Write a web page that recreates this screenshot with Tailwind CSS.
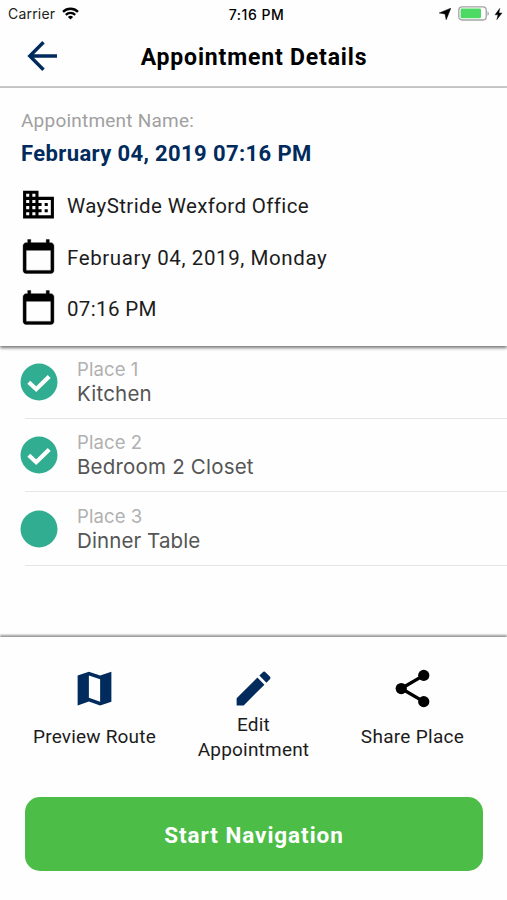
<!DOCTYPE html>
<html lang="en">
<head>
  <meta charset="UTF-8" />
  <meta name="viewport" content="width=device-width, initial-scale=1" />
  <title>Appointment Details</title>
  <script src="https://cdn.jsdelivr.net/npm/@tailwindcss/browser@4"></script>
</head>
<body class="bg-[#fefefe] h-[900px] flex flex-col overflow-hidden font-[Roboto,sans-serif] text-[#1c1c1c]">

  <!-- Status bar -->
  <div class="h-[27px] shrink-0 grid grid-cols-3 items-center pl-2 pr-1 font-[Inter,sans-serif] text-black">
    <div class="flex items-center gap-[7px]">
      <span class="text-[14px] tracking-[0.2px] text-[#222]">Carrier</span>
      <svg class="w-[17px] h-[13px]" viewBox="0 0 17 13" fill="none" stroke="#000" stroke-width="2.3">
        <path d="M1 4.8a10.8 10.8 0 0 1 15 0" />
        <path d="M3.8 7.8a6.8 6.8 0 0 1 9.4 0" />
        <path d="M8.5 12.6L5.9 9.9a3.8 3.8 0 0 1 5.2 0z" fill="#000" stroke="none" />
      </svg>
    </div>
    <span class="pt-px pl-0.5 text-[14px] font-medium text-center whitespace-nowrap tracking-[0.5px]">7:16 PM</span>
    <div class="flex items-center justify-end">
      <svg class="w-3 h-3 mr-[7px]" viewBox="0 0 12 12"><path d="M11.8.2L7.2 11.8 6 6 .2 5z" stroke="#000" stroke-width=".5" /></svg>
      <svg class="w-8 h-[15px] mr-1" viewBox="0 0 32 15">
        <rect x=".8" y=".8" width="27.4" height="13.2" rx="3.2" fill="#fff" stroke="#a3a3a3" stroke-width="1.3" />
        <rect x="2.6" y="2.6" width="20.4" height="9.6" rx="1.2" fill="#4cd964" />
        <path d="M29.5 5.2c1.8.6 1.8 4 0 4.6z" fill="#a3a3a3" />
      </svg>
      <svg class="w-[9px] h-3" viewBox="0 0 9 12"><path d="M5.8.3L1 6.8h3L2.8 11.7 8 5H4.9z" stroke="#000" stroke-width=".4" /></svg>
    </div>
  </div>

  <!-- Title bar -->
  <header class="h-[61px] shrink-0 grid grid-cols-[80px_1fr_80px] items-center border-b-2 border-[#c9c9c9]">
    <svg class="w-[31px] h-[31px] ml-[27px]" viewBox="0 0 31 31" fill="none" stroke="#002b5c" stroke-width="3.4">
      <path d="M30 15H3M16.5 1.3L2.8 15l13.7 13.7" />
    </svg>
    <h1 class="pt-[3px] pl-px text-[23px] leading-7 font-bold text-black text-center whitespace-nowrap tracking-[0.83px]">Appointment Details</h1>
  </header>

  <!-- Appointment info -->
  <section class="relative z-10 h-[258px] shrink-0 pl-[21px] bg-[#fefefe] shadow-[0_2px_3px_#777]">
    <p class="pt-[21px] text-[19px] leading-6 text-[#a0a0a0] tracking-[0.22px]">Appointment Name:</p>
    <p class="pt-[7px] text-[22px] leading-7 font-bold text-[#002b5c] tracking-[0.38px]">February 04, 2019 07:16 PM</p>
    <ul class="mt-[18px] flex flex-col gap-[14px] text-[20.5px]">
      <li class="flex items-center gap-[10px]">
        <svg class="w-[37px] h-[37px] -ml-px" viewBox="0 0 24 24"><path d="M12 7V3H2v18h20V7H12zM6 19H4v-2h2v2zm0-4H4v-2h2v2zm0-4H4V9h2v2zm0-4H4V5h2v2zm4 12H8v-2h2v2zm0-4H8v-2h2v2zm0-4H8V9h2v2zm0-4H8V5h2v2zm10 12h-8v-2h2v-2h-2v-2h2v-2h-2V9h8v10zm-2-8h-2v2h2v-2zm0 4h-2v2h2v-2z" /></svg>
        <span class="pt-1 tracking-[0.38px]">WayStride Wexford Office</span>
      </li>
      <li class="flex items-center gap-[10px]">
        <svg class="w-[37px] h-[37px] -ml-px mt-px -mb-px" viewBox="0 0 24 24"><path d="M20 3h-1V1h-2v2H7V1H5v2H4c-1.1 0-2 .9-2 2v16c0 1.1.9 2 2 2h16c1.1 0 2-.9 2-2V5c0-1.1-.9-2-2-2zm0 18H4V8h16v13z" stroke="#000" stroke-width=".25" /></svg>
        <span class="pt-[5px] tracking-[0.6px]">February 04, 2019, Monday</span>
      </li>
      <li class="flex items-center gap-[10px]">
        <svg class="w-[37px] h-[37px] -ml-px mt-px -mb-px" viewBox="0 0 24 24"><path d="M20 3h-1V1h-2v2H7V1H5v2H4c-1.1 0-2 .9-2 2v16c0 1.1.9 2 2 2h16c1.1 0 2-.9 2-2V5c0-1.1-.9-2-2-2zm0 18H4V8h16v13z" stroke="#000" stroke-width=".25" /></svg>
        <span class="pt-[5px] tracking-[0.35px]">07:16 PM</span>
      </li>
    </ul>
  </section>

  <!-- Places -->
  <ul class="h-[291px] shrink-0 pl-[25px] font-[Inter,sans-serif]">
    <li class="h-[73px] flex items-center gap-[19px] border-b border-[#e6e6e6]">
      <svg class="w-[38px] h-[38px] -ml-[5px]" viewBox="0 0 38 38"><circle cx="19" cy="19" r="18.5" fill="#31ae91" /><path d="M8.8 19.2l7.4 7L29.2 13.5" fill="none" stroke="#fff" stroke-width="4.2" /></svg>
      <div>
        <p class="text-[18.5px] leading-6 text-[#b0b0b0] tracking-[0.1px]">Place 1</p>
        <p class="text-[20.5px] leading-[26px] text-[#555] tracking-[0.2px]">Kitchen</p>
      </div>
    </li>
    <li class="h-[73px] flex items-center gap-[19px] border-b border-[#e6e6e6]">
      <svg class="w-[38px] h-[38px] -ml-[5px]" viewBox="0 0 38 38"><circle cx="19" cy="19" r="18.5" fill="#31ae91" /><path d="M8.8 19.2l7.4 7L29.2 13.5" fill="none" stroke="#fff" stroke-width="4.2" /></svg>
      <div>
        <p class="text-[18.5px] leading-6 text-[#b0b0b0] tracking-[0.1px]">Place 2</p>
        <p class="text-[20.5px] leading-[26px] text-[#555] tracking-[0.2px]">Bedroom 2 Closet</p>
      </div>
    </li>
    <li class="h-[74px] flex items-center gap-[19px] border-b border-[#e6e6e6]">
      <svg class="w-[38px] h-[38px] -ml-[5px]" viewBox="0 0 38 38"><circle cx="19" cy="19" r="18.5" fill="#31ae91" /></svg>
      <div>
        <p class="text-[18.5px] leading-6 text-[#b0b0b0] tracking-[0.1px]">Place 3</p>
        <p class="text-[20.5px] leading-[26px] text-[#555] tracking-[0.1px]">Dinner Table</p>
      </div>
    </li>
  </ul>

  <!-- Actions -->
  <footer class="grow bg-[#fefefe] shadow-[0_-2px_2px_#999] pt-[29px]">
    <div class="grid grid-cols-3 px-[15px] text-center text-[19px] leading-[24.5px]">
      <div class="flex flex-col items-center">
        <svg class="w-[45px] h-[45px]" viewBox="0 0 24 24" fill="#002b5c"><path d="M21 3l-6 2.1L9 3 3 5v16l6-2.1 6 2.1 6-2V3zM15 19l-6-2.1V5l6 2.1V19z" /></svg>
        <div class="h-[50px] pt-[3px] flex items-center whitespace-nowrap tracking-[0.2px]">Preview Route</div>
      </div>
      <div class="flex flex-col items-center">
        <svg class="w-[45px] h-[45px]" viewBox="0 0 24 24" fill="#002b5c"><path d="M3 17.25V21h3.75L17.81 9.94l-3.75-3.75L3 17.25zM20.71 7.04c.39-.39.39-1.02 0-1.41l-2.34-2.34c-.39-.39-1.02-.39-1.41 0l-1.83 1.83 3.75 3.75 1.83-1.83z" /></svg>
        <div class="h-[50px] pt-[3px] flex items-center tracking-[0.2px]">Edit<br>Appointment</div>
      </div>
      <div class="flex flex-col items-center">
        <svg class="w-[45px] h-[45px]" viewBox="0 0 24 24"><path d="M6 12L18 5M6 12l12 7" stroke="#000" stroke-width="1.8" /><circle cx="6" cy="12" r="3" /><circle cx="18" cy="5" r="3" /><circle cx="18" cy="19" r="3" /></svg>
        <div class="h-[50px] pt-[3px] flex items-center whitespace-nowrap tracking-[0.3px]">Share Place</div>
      </div>
    </div>
    <button class="mt-[36px] mx-[25px] pt-1 w-[458px] h-[74px] rounded-[15px] bg-[#4cbd46] text-white text-[22.5px] font-bold tracking-[0.95px]">Start Navigation</button>
  </footer>
</body>
</html>
